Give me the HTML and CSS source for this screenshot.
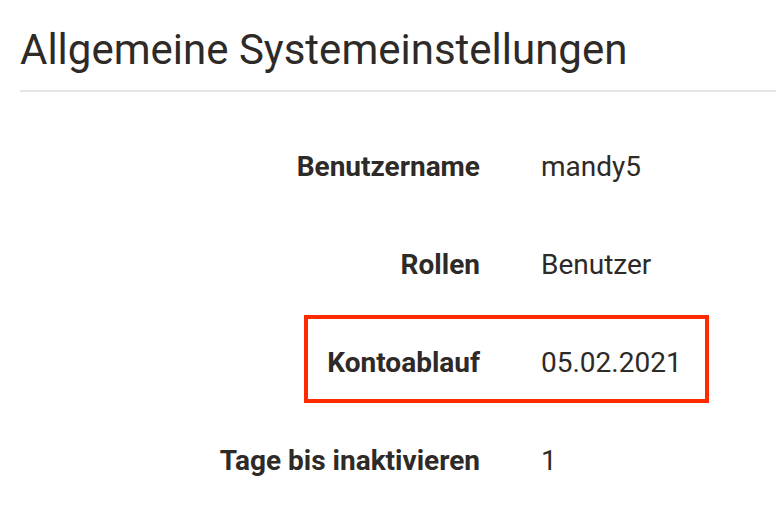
FILE: index.html
```html
<!DOCTYPE html>
<html lang="de">
<head>
<meta charset="utf-8">
<title>Allgemeine Systemeinstellungen</title>
<link rel="stylesheet" href="styles.css">
</head>
<body>
<div class="page">
  <h1 class="title">Allgemeine Systemeinstellungen</h1>
  <div class="list">
    <div class="row"><div class="label">Benutzername</div><div class="value">mandy5</div></div>
    <div class="row"><div class="label">Rollen</div><div class="value">Benutzer</div></div>
    <div class="row highlight"><div class="label">Kontoablauf</div><div class="value">05.02.2021</div></div>
    <div class="row"><div class="label">Tage bis inaktivieren</div><div class="value">1</div></div>
  </div>
</div>
</body>
</html>
```

FILE: styles.css
```css
html, body {
  margin: 0;
  padding: 0;
  background: #ffffff;
}
body {
  font-family: Roboto, "Liberation Sans", sans-serif;
  color: #2e2a27;
  width: 776px;
  height: 516px;
  overflow: hidden;
}
.page {
  padding-left: 20px;
}
.title {
  margin: 0;
  padding-top: 25px;
  padding-bottom: 15px;
  font-size: 42px;
  line-height: 50px;
  font-weight: 400;
  border-bottom: 2px solid #e5e5e5;
}
.list {
  display: flex;
  flex-direction: column;
  gap: 64px;
  padding-top: 58px;
}
.row {
  position: relative;
  display: flex;
  align-items: baseline;
  font-size: 28px;
  line-height: 34px;
}
.label {
  width: 460px;
  text-align: right;
  font-weight: 700;
  flex: none;
}
.value {
  margin-left: 61px;
}
.highlight::after {
  content: "";
  position: absolute;
  left: 284px;
  top: -31px;
  width: 397px;
  height: 80px;
  border: 4px solid #ff2a00;
}
```
